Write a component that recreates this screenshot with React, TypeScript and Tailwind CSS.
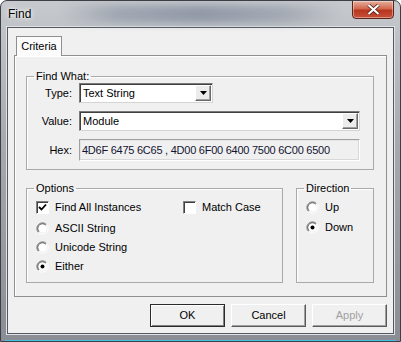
import type { ReactNode } from "react";

function ComboArrow() {
  return (
    <div className="flex h-[16px] w-[16px] items-center justify-center border border-t-white border-l-white border-r-[#696969] border-b-[#696969] bg-[#ececec] shadow-[inset_-1px_-1px_0_#a0a0a0]">
      <svg width="7" height="4" viewBox="0 0 7 4">
        <polygon points="0,0 7,0 3.5,4" fill="#000" />
      </svg>
    </div>
  );
}

function Combo({ value, width }: { value: string; width: string }) {
  return (
    <div
      className={`flex h-[20px] ${width} items-center justify-between border border-t-[#7a7a7a] border-l-[#7a7a7a] border-r-[#d4d4d4] border-b-[#d4d4d4] bg-white pl-[3px] pr-[1px] shadow-[inset_1px_1px_0_#404040]`}
    >
      <span className="text-[11px] leading-none text-black">{value}</span>
      <ComboArrow />
    </div>
  );
}

function Checkbox({ checked, label }: { checked?: boolean; label: string }) {
  return (
    <div className="flex items-center gap-[6px]">
      <div className="flex h-[13px] w-[13px] items-center justify-center border border-t-[#808080] border-l-[#808080] border-r-white border-b-white bg-white shadow-[inset_1px_1px_0_#404040]">
        {checked && (
          <svg width="9" height="9" viewBox="0 0 9 9">
            <polyline points="1,4 3.5,6.5 8,1.5" fill="none" stroke="#000" strokeWidth="1.8" />
          </svg>
        )}
      </div>
      <span className="text-[11px] leading-none">{label}</span>
    </div>
  );
}

function Radio({ checked, label }: { checked?: boolean; label: string }) {
  return (
    <div className="flex items-center gap-[6px]">
      <svg width="13" height="13" viewBox="0 0 13 13">
        <path d="M10.5 2.5 A5.5 5.5 0 0 0 2.5 10.5" fill="none" stroke="#808080" strokeWidth="1" />
        <path d="M9.8 3.2 A4.5 4.5 0 0 0 3.2 9.8" fill="none" stroke="#404040" strokeWidth="1" />
        <path d="M2.5 10.5 A5.5 5.5 0 0 0 10.5 2.5" fill="none" stroke="#ffffff" strokeWidth="1" />
        <circle cx="6.5" cy="6.5" r="4" fill="#fff" />
        {checked && <circle cx="6.5" cy="6.5" r="2" fill="#000" />}
      </svg>
      <span className="text-[11px] leading-none">{label}</span>
    </div>
  );
}

function Group({ title, className, children }: { title: string; className: string; children: ReactNode }) {
  return (
    <fieldset className={`border border-[#a9a9a9] shadow-[inset_1px_1px_0_#fff] ${className}`}>
      <legend className="ml-[7px] px-[2px] text-[11px] leading-[13px]">{title}</legend>
      {children}
    </fieldset>
  );
}

function Button({ label, disabled }: { label: string; disabled?: boolean }) {
  return (
    <button
      className={`flex h-[23px] w-[75px] items-center justify-center border text-[11px] ${
        label === "OK"
          ? "border-[#2a2a2a] shadow-[inset_1px_1px_0_#fff,inset_-1px_-1px_0_#808080]"
          : "border-t-white border-l-white border-r-[#5a5a5a] border-b-[#5a5a5a] shadow-[inset_-1px_-1px_0_#a0a0a0]"
      } bg-[#f0f0f0] ${disabled ? "text-[#a0a0a0]" : "text-black"}`}
    >
      {label}
    </button>
  );
}

export default function App() {
  return (
    <div className="relative flex h-[342px] w-[401px] flex-col overflow-hidden rounded-t-[7px] border border-[#3c4046] bg-[linear-gradient(to_bottom,#c6c9cd,#a7abb0_40%,#8a8e94)] font-['Liberation_Sans',Arial,sans-serif] text-black">
      <div className="absolute inset-x-[60px] top-[4px] h-[18px] rounded-full bg-[linear-gradient(to_right,transparent,#8a93a3_20%,#6f7a8f_50%,#8f97a6_80%,transparent)] opacity-60 blur-[4px]" />
      <div className="relative flex h-[26px] items-center pl-[7px]">
        <span className="text-[12px] text-black [text-shadow:0_0_6px_#fff,0_0_3px_#fff]">Find</span>
        <div className="absolute right-[6px] top-[-1px] flex h-[19px] w-[42px] items-center justify-center rounded-b-[4px] border border-[#5a2418] bg-[linear-gradient(to_bottom,#e7b0a0,#d2684e_45%,#b8361e_55%,#c8503a)] shadow-[inset_0_0_0_1px_rgba(255,255,255,0.4)]">
          <svg width="13" height="11" viewBox="0 0 13 11">
            <path d="M1.5 1 L11.5 10 M11.5 1 L1.5 10" stroke="#4a1a12" strokeWidth="3.6" />
            <path d="M1.5 1 L11.5 10 M11.5 1 L1.5 10" stroke="#fff" strokeWidth="2.2" />
          </svg>
        </div>
      </div>

      <div className="mx-[6px] mb-[7px] flex flex-1 flex-col border border-[#55595f] bg-[#f0f0f0] shadow-[0_0_0_1px_#dfe3e8]">
        <div className="flex flex-col pl-[6px] pt-[8px]">
          <div className="relative z-10 ml-[2px] flex h-[20px] w-[46px] items-center justify-center border border-b-0 border-[#8e8f8f] bg-[#fbfbfb] text-[11px]">
            Criteria
          </div>
          <div className="-mt-[1px] flex h-[242px] w-[373px] flex-col border border-[#8e8f8f] bg-[#f0f0f0] pl-[11px] pt-[14px] shadow-[inset_1px_1px_0_#fff]">
            <Group title="Find What:" className="w-[348px] pb-[8px]">
              <div className="flex flex-col gap-[8px]">
                <div className="flex items-center">
                  <span className="w-[46px] pr-[1px] text-right text-[11px]">Type:</span>
                  <div className="ml-[6px]">
                    <Combo value="Text String" width="w-[134px]" />
                  </div>
                </div>
                <div className="flex items-center">
                  <span className="w-[46px] pr-[1px] text-right text-[11px]">Value:</span>
                  <div className="ml-[6px]">
                    <Combo value="Module" width="w-[281px]" />
                  </div>
                </div>
                <div className="flex items-center">
                  <span className="w-[46px] pr-[1px] text-right text-[11px]">Hex:</span>
                  <div className="ml-[6px] flex h-[22px] w-[281px] items-center border border-t-[#a0a0a0] border-l-[#a0a0a0] border-r-white border-b-white bg-[#f0f0f0] pl-[2px] shadow-[inset_-1px_-1px_0_#d8d8d8,inset_1px_1px_0_#e4e4e4] text-[11px] tracking-[-0.25px] text-[#141432]">
                    4D6F 6475 6C65 , 4D00 6F00 6400 7500 6C00 6500
                  </div>
                </div>
              </div>
            </Group>

            <div className="mt-[12px] flex gap-[13px]">
              <Group title="Options" className="h-[101px] w-[257px]">
                <div className="flex flex-col pl-[9px] pt-[4px]">
                  <div className="flex h-[17px] items-center">
                    <div className="w-[147px]">
                      <Checkbox checked label="Find All Instances" />
                    </div>
                    <Checkbox label="Match Case" />
                  </div>
                  <div className="mt-[3px] flex h-[19px] items-center">
                    <Radio label="ASCII String" />
                  </div>
                  <div className="flex h-[19px] items-center">
                    <Radio label="Unicode String" />
                  </div>
                  <div className="flex h-[19px] items-center">
                    <Radio checked label="Either" />
                  </div>
                </div>
              </Group>
              <Group title="Direction" className="h-[101px] w-[78px]">
                <div className="flex flex-col pl-[9px] pt-[4px]">
                  <div className="flex h-[17px] items-center">
                    <Radio label="Up" />
                  </div>
                  <div className="mt-[2px] flex h-[19px] items-center">
                    <Radio checked label="Down" />
                  </div>
                </div>
              </Group>
            </div>
          </div>
        </div>

        <div className="mt-[7px] flex justify-end gap-[6px] pr-[6px]">
          <Button label="OK" />
          <Button label="Cancel" />
          <Button label="Apply" disabled />
        </div>
      </div>
      <div className="absolute bottom-0 left-[4px] right-[4px] h-[1px] bg-[#3fc3e6]" />
    </div>
  );
}
